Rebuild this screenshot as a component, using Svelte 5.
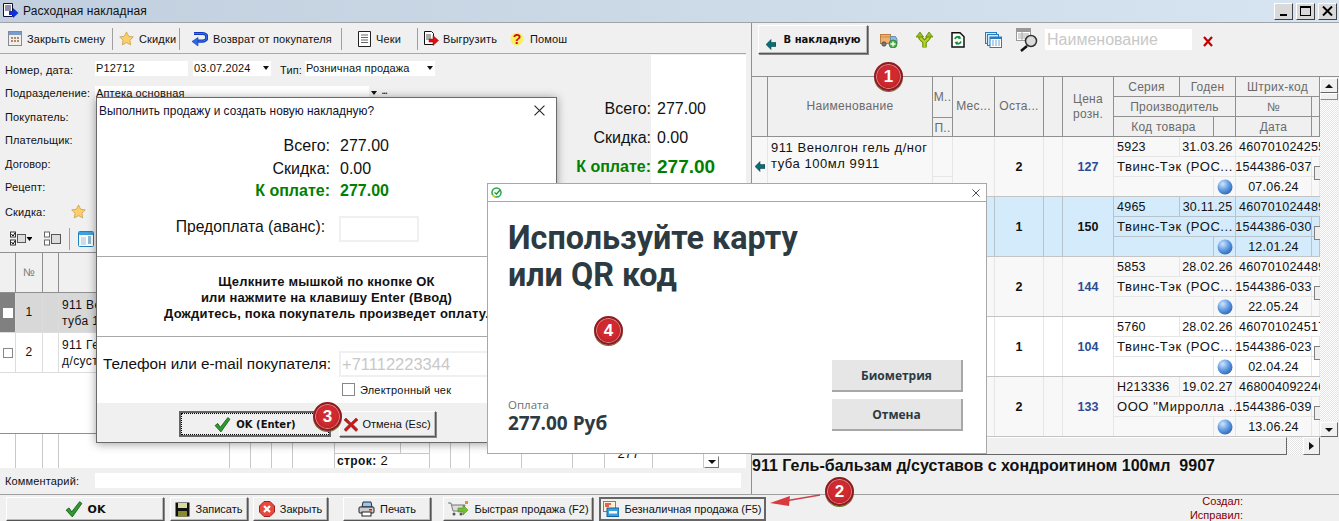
<script>
  // Right grid rows
  const goods = [
    { cls: 'alt', name: '911 Венолгон гель д/ног туба 100мл 9911', cur: true, qty: 2, price: 127, ser: '5923', exp: '31.03.26', code: '4607010242551', mfr: 'Твинс-Тэк (РОС...', num: '1544386-037', date: '07.06.24' },
    { cls: 'sel', name: '911 Гель-бальзам д/суставов с хондроитином', qty: 1, price: 150, ser: '4965', exp: '30.11.25', code: '4607010244890', mfr: 'Твинс-Тэк (РОС...', num: '1544386-030', date: '12.01.24' },
    { cls: 'alt', name: '911 Гель-бальзам', qty: 2, price: 144, ser: '5853', exp: '28.02.26', code: '4607010244890', mfr: 'Твинс-Тэк (РОС...', num: '1544386-033', date: '22.05.24' },
    { cls: '', name: '911 Гель', qty: 1, price: 104, ser: '5760', exp: '28.02.26', code: '4607010245170', mfr: 'Твинс-Тэк (РОС...', num: '1544386-023', date: '02.04.24' },
    { cls: 'alt', name: '911 Крем', qty: 2, price: 133, ser: 'Н213336', exp: '19.02.27', code: '4680040922460', mfr: 'ООО "Мирролла ...', num: '1544386-039', date: '13.06.24' }
  ];

  const lines = [
    { n: 1, a: '911 Венолгон гель д/ног', b: 'туба 100мл 9911', on: true },
    { n: 2, a: '911 Гель-бальзам', b: 'д/суставов с хондроитином', on: false }
  ];
</script>

{#snippet star()}
  <svg width="15" height="15" viewBox="0 0 16 16"><path d="M8 1l2.200 4.600 5 .7-3.600 3.500.9 5L8 12.400l-4.500 2.400.9-5L.8 6.300l5-.7z" fill="#fdcf6a" stroke="#d0a85a"/></svg>
{/snippet}
{#snippet docLines()}
  <svg width="13" height="16" viewBox="0 0 13 16"><path d="M.5.500h12v15H.5z" fill="#fff" stroke="#222"/><path d="M3 4h7M3 6.500h7M3 9h7M3 11.500h7" stroke="#666"/></svg>
{/snippet}
{#snippet docArrow(size)}
  <svg width={size} height={size} viewBox="0 0 16 16"><path d="M1.500.5h7l2 2v11h-9z" fill="#fff" stroke="#111"/><path d="M3 4h5M3 6h5M3 8h5" stroke="#555"/><path d="M6 8h4V4.500l5.500 5-5.500 5V11H6z" fill="#e01010" stroke="#900" stroke-width=".5"/></svg>
{/snippet}
{#snippet check(w)}
  <svg width={w} height={w} viewBox="0 0 16 16"><path d="M1 9l2.500-2 2.500 3.500L13 1.500l2 1.500-8.500 12z" fill="#2f9a2f" stroke="#0c4f0c" stroke-width=".7"/></svg>
{/snippet}
{#snippet sphere()}
  <svg class="sphere" width="16" height="16" viewBox="0 0 16 16"><defs><radialGradient id="ball" cx=".35" cy=".3" r=".8"><stop offset="0" stop-color="#cfe4fb"/><stop offset=".55" stop-color="#5b97e0"/><stop offset="1" stop-color="#2c5fb0"/></radialGradient></defs><circle cx="8" cy="8" r="7.500" fill="url(#ball)"/></svg>
{/snippet}
{#snippet tealArrow()}
  <svg width="10" height="11" viewBox="0 0 10 11"><path d="M0 5.500L5 .5v3h5v4H5v3z" fill="#056e78" stroke="#033" stroke-width=".5"/></svg>
{/snippet}
{#snippet thinX(s)}
  <svg width={s} height={s} viewBox="0 0 10 10"><path d="M.5.500l9 9M9.500.500l-9 9" stroke="#222" stroke-width="1"/></svg>
{/snippet}

<div class="page">
  <header class="titlebar">
    <svg width="16" height="16" viewBox="0 0 16 16"><path d="M.5.500h9v13h-9z" fill="#fff" stroke="#113"/><path d="M2 3h6M2 5h6M2 7h6" stroke="#225"/><path d="M6 8h4V5l5.500 5-5.500 5v-3H6z" fill="#1030e0"/></svg>
    <span class="title">Расходная накладная</span>
    <div class="winbtns">
      <span class="winbtn"><i class="wmin"></i></span>
      <span class="winbtn"><i class="wmax"></i></span>
      <span class="winbtn"><svg width="11" height="10" viewBox="0 0 11 10"><path d="M1 .5l9 9M10 .5l-9 9" stroke="#000" stroke-width="2"/></svg></span>
    </div>
  </header>

  <div class="main">
    <section class="left">
      <div class="toolbar">
        <span class="tool t1">
          <svg width="14" height="15" viewBox="0 0 14 15"><rect x=".5" y=".5" width="13" height="14" fill="#f0eee8" stroke="#889"/><rect x="1" y="1" width="12" height="3" fill="#7a9cc8"/><path d="M3 6h2v2H3zM6 6h2v2H6zM9 6h2v2H9zM3 9h2v2H3zM6 9h2v2H6zM9 9h2v2H9z" fill="#b08a70"/></svg>
          Закрыть смену
        </span>
        <i class="vsep"></i>
        <span class="tool t2">{@render star()} Скидки</span>
        <i class="vsep"></i>
        <span class="tool t3">
          <svg width="17" height="16" viewBox="0 0 17 16"><path d="M3 2.500h9a3.800 3.800 0 010 7.600H6" fill="none" stroke="#1238c0" stroke-width="3.200"/><path d="M3 2.500h9a3.800 3.800 0 010 7.600H6" fill="none" stroke="#3a7ae8" stroke-width="1"/><path d="M7 6.500L1 10.500l6 4.500z" fill="#2a6be0" stroke="#1238c0" stroke-width=".6"/></svg>
          Возврат от покупателя
        </span>
        <i class="vsep"></i>
        <span class="tool t4">{@render docLines()} Чеки</span>
        <i class="vsep"></i>
        <span class="tool t5">{@render docArrow(16)} Выгрузить</span>
        <span class="tool t6">
          <svg width="14" height="16" viewBox="0 0 14 16"><circle cx="7" cy="8" r="6.500" fill="#f8f060"/><text x="7" y="13" text-anchor="middle" font-size="14" font-weight="700" fill="#d01010" font-family="Liberation Sans">?</text></svg>
          Помош
        </span>
      </div>

      <div class="formarea">
        <div class="form">
          <div class="frow">
            <span class="lbl">Номер, дата:</span>
            <span class="field fnum">P12712</span>
            <span class="field fdate">03.07.2024<i class="drop"></i></span>
            <span class="tiplbl">Тип:</span>
            <span class="field ftype">Розничная продажа<i class="drop"></i></span>
          </div>
          <div class="frow">
            <span class="lbl">Подразделение:</span>
            <span class="field fdept">Аптека основная</span>
            <i class="drop solo"></i>
            <span class="dots">•••</span>
          </div>
          <div class="frow"><span class="lbl">Покупатель:</span></div>
          <div class="frow"><span class="lbl">Плательщик:</span></div>
          <div class="frow"><span class="lbl">Договор:</span></div>
          <div class="frow"><span class="lbl">Рецепт:</span></div>
          <div class="frow last"><span class="lbl sk">Скидка:</span>{@render star()}</div>
        </div>
        <div class="totals">
          <div class="tlabels">
            <span>Всего:</span>
            <span>Скидка:</span>
            <span class="pay">К оплате:</span>
          </div>
          <div class="tvalues">
            <span>277.00</span>
            <span>0.00</span>
            <span class="pay big">277.00</span>
          </div>
        </div>
      </div>

      <div class="gridbar">
        <svg width="22" height="16" viewBox="0 0 22 16"><rect x=".5" y="1" width="5" height="5" fill="#fff" stroke="#333"/><rect x=".5" y="9" width="5" height="5" fill="#fff" stroke="#333"/><path d="M1.500 3l1.500 2 2-3M1.500 11l1.500 2 2-3" stroke="#000" fill="none"/><rect x="7.500" y="3.500" width="8" height="8" fill="#ddd" stroke="#555"/><path d="M16.500 6h6l-3 4z" fill="#000"/></svg>
        <svg class="g2" width="19" height="16" viewBox="0 0 19 16"><rect x=".5" y="1" width="5" height="5" fill="#fff" stroke="#666"/><rect x=".5" y="9" width="5" height="5" fill="#fff" stroke="#666"/><rect x="7.500" y="3.500" width="9" height="9" fill="#ddd" stroke="#555"/></svg>
        <i class="vsep g3"></i>
        <svg width="16" height="16" viewBox="0 0 16 16"><rect x=".5" y=".5" width="15" height="15" rx="1" fill="#fff" stroke="#2080c0"/><rect x="1" y="1" width="14" height="3" fill="#40a0e0"/><path d="M3 6h5v8H3z" fill="#cde"/><path d="M10 6h3M10 8h3M10 10h3M10 12h3" stroke="#27a"/></svg>
      </div>

      <div class="lgrid">
        <div class="lhead">
          <i></i><b>№</b><i></i><i class="rest"></i>
        </div>
        {#each lines as l}
          <div class="lrow" class:on={l.on}>
            <span class="lchk"><i></i></span>
            <span class="lnum">{l.n}</span>
            <span class="lgap"></span>
            <span class="ltext">{l.a}<br />{l.b}</span>
          </div>
        {/each}
        <div class="lempty"></div>
        <div class="lfoot">
          <i></i><i></i><i></i><i></i><i></i><i></i><i></i><i></i>
          <div class="fcount"><div class="ftop"><i></i></div><b>строк:</b> 2</div>
          <i></i><i></i><i></i><i></i><i></i>
          <div class="fsum">277</div>
          <i></i>
          <span class="fscroll"></span>
        </div>
      </div>

      <div class="comment">
        <span class="lbl">Комментарий:</span>
        <span class="field fcomment"></span>
      </div>
    </section>

    <section class="right">
      <div class="rtools">
        <button class="raised back">{@render tealArrow()} В накладную</button>
        <svg class="ri1" width="18" height="16" viewBox="0 0 18 16"><rect x=".5" y="2.500" width="10" height="9" fill="#f2b070" stroke="#b88040"/><path d="M1 5h9" stroke="#d08840"/><path d="M10.500 4.500h5l1.500 3v4h-6.500z" fill="#8ab8e8" stroke="#6a8ab0"/><circle cx="4" cy="12" r="2.200" fill="#777" stroke="#444" stroke-width=".7"/><circle cx="13" cy="12" r="4" fill="#48b048" stroke="#2a7a2a" stroke-width=".7"/><path d="M10.500 12h5M13 9.500v5" stroke="#fff" stroke-width="1.300"/></svg>
        <svg class="ri2" width="17" height="16" viewBox="0 0 17 16"><path d="M8.500 15.500V11C8.500 8 4 8 4 4M8.500 11C8.500 8 13 8 13 4" fill="none" stroke="#6a8a10" stroke-width="4.500"/><path d="M8.500 15V11C8.500 8 4 8 4 4M8.500 11C8.500 8 13 8 13 4" fill="none" stroke="#b4d820" stroke-width="2.200"/><path d="M0 5L4 0l3.500 5zM9.500 5L13 0l4 5z" fill="#9cc018" stroke="#5a7a08" stroke-width=".7"/></svg>
        <svg class="ri3" width="14" height="16" viewBox="0 0 14 16"><path d="M1 .8h8l4 4V15H1z" fill="#fff" stroke="#111" stroke-width="1.500"/><path d="M4 7a3.200 3.200 0 015-1.500M10 9.500a3.200 3.200 0 01-5 1.500" fill="none" stroke="#109030" stroke-width="1.800"/><path d="M8 3.500l2.500 3-3.500.5zM6 13l-2.500-3 3.500-.5z" fill="#109030"/></svg>
        <svg class="ri4" width="17" height="16" viewBox="0 0 17 16"><rect x=".5" y=".5" width="11" height="11" fill="#d4e8f8" stroke="#2a7cc0"/><rect x="2.500" y="2.500" width="11" height="11" fill="#d4e8f8" stroke="#2a7cc0"/><rect x="5" y="5" width="11.500" height="10.500" fill="#fff" stroke="#2a7cc0"/><rect x="5" y="5" width="11.500" height="2" fill="#2a7cc0"/><path d="M7 9h8M7 11h8M7 13h8" stroke="#6aa0d0" stroke-dasharray="2 1"/></svg>
        <svg class="ri5" width="23" height="24" viewBox="0 0 23 24"><rect x=".5" y=".5" width="14" height="12" fill="#fff" stroke="#999"/><rect x="1" y="1" width="13" height="3" fill="#999"/><path d="M2 6h11M2 8h11M2 10h11" stroke="#aaa"/><path d="M6 4v8" stroke="#aaa"/><circle cx="15" cy="13" r="5.500" fill="#dcdcdc" stroke="#333" stroke-width="1.500"/><path d="M11 18l-6 5" stroke="#111" stroke-width="2.500"/></svg>
        <span class="search">Наименование</span>
        <svg class="ri6" width="10" height="11" viewBox="0 0 10 11"><path d="M1 1l8 9M9 1l-8 9" stroke="#c00000" stroke-width="2.200"/></svg>
      </div>

      <div class="rgridwrap">
        <div class="rgrid">
          <div class="rhead">
            <span class="c0 hc"></span>
            <span class="c1 hc">Наименование</span>
            <span class="c2 hc split"><em>М..</em><em>П..</em></span>
            <span class="c3 hc">Мес...</span>
            <span class="c4 hc">Оста...</span>
            <span class="c5 hc"></span>
            <span class="c6 hc">Цена<br />розн.</span>
            <div class="sub subhead">
              <div class="s1"><span>Серия</span><span>Годен</span><span>Штрих-код</span></div>
              <div class="s2"><span>Производитель</span><span>№</span><span></span></div>
              <div class="s3"><span>Код товара</span><span></span><span>Дата</span><span></span></div>
            </div>
          </div>
          {#each goods as g}
            <div class="rrow {g.cls}">
              <span class="c0 dc">{#if g.cur}{@render tealArrow()}{/if}</span>
              <span class="c1 dc name">{g.name}</span>
              <span class="c2 dc split"><em></em><em></em></span>
              <span class="c3 dc"></span>
              <span class="c4 dc qty">{g.qty}</span>
              <span class="c5 dc"></span>
              <span class="c6 dc price">{g.price}</span>
              <div class="sub">
                <div class="s1"><span class="tl">{g.ser}</span><span>{g.exp}</span><span class="clip">{g.code}</span></div>
                <div class="s2"><span class="tl mf">{g.mfr}</span><span>{g.num}</span><span></span></div>
                <div class="s3"><span></span><span>{@render sphere()}</span><span>{g.date}</span><span></span></div>
                <i class="stub"></i>
              </div>
            </div>
          {/each}
        </div>
        <div class="vscroll">
          <span class="sbtn"><i class="up"></i></span>
          <span class="thumb"></span>
          <span class="strack"></span>
          <span class="sbtn"><i class="down"></i></span>
        </div>
        <div class="hscroll">
          <span class="hthumb"></span>
          <span class="hbtn"><i class="rightarrow"></i></span>
        </div>
      </div>

      <div class="goodname">911 Гель-бальзам д/суставов с хондроитином 100мл&nbsp;&nbsp;9907</div>
    </section>
  </div>

  <footer class="bottom">
    <button class="raised b-ok">{@render check(18)} <b>OK</b></button>
    <button class="raised b-save">
      <svg width="15" height="15" viewBox="0 0 15 15"><path d="M.5.500h14v14H.500z" fill="#111"/><rect x="3" y="1" width="9" height="5" fill="#d8d8a0"/><rect x="3" y="9" width="9" height="5.500" fill="#8a8a30"/></svg>
      Записать
    </button>
    <button class="raised b-close">
      <svg width="16" height="16" viewBox="0 0 16 16"><path d="M5 .5h6L15.500 5v6L11 15.500H5L.5 11V5z" fill="#e84a3c" stroke="#a02020"/><path d="M5 5l6 6M11 5l-6 6" stroke="#fff" stroke-width="2.200"/></svg>
      Закрыть
    </button>
    <button class="raised b-print">
      <svg width="17" height="16" viewBox="0 0 17 16"><path d="M5 1h8l1 5H4z" fill="#9ec4ec" stroke="#234"/><rect x="1" y="6" width="15" height="6" rx="1" fill="#ccc" stroke="#222"/><rect x="4" y="11" width="9" height="4" fill="#fff" stroke="#222"/><rect x="11" y="8" width="3" height="1.500" fill="#d02020"/></svg>
      Печать
    </button>
    <button class="raised b-fast">
      <svg width="22" height="16" viewBox="0 0 22 16"><path d="M1 2h3l2 8h10l2-6H5" fill="#ddd" stroke="#777"/><circle cx="7" cy="13" r="1.500" fill="#555"/><circle cx="14" cy="13" r="1.500" fill="#555"/><path d="M11 7h5V4l5 5-5 5v-3h-5z" fill="#70c030" stroke="#487818" stroke-width=".5"/><rect x="18" y="0" width="3" height="3" fill="#e09030"/></svg>
      Быстрая продажа (F2)
    </button>
    <button class="raised b-card">
      <svg width="16" height="16" viewBox="0 0 16 16"><rect x=".5" y=".5" width="12" height="10" fill="#fff0d8" stroke="#c07020"/><path d="M2 3h6M2 5h4" stroke="#e03020" stroke-width="1.500"/><rect x="4" y="7" width="12" height="8.500" fill="#38a0e0" stroke="#15609a"/><rect x="6" y="10" width="8" height="2.500" fill="#fff"/></svg>
      Безналичная продажа (F5)
    </button>
    <div class="stamp"><span>Создал:</span><span>Исправил:</span></div>
  </footer>

  <!-- Payment confirm dialog -->
  <div class="dlg dlg-pay">
    <div class="dtitle"><span>Выполнить продажу и создать новую накладную?</span>{@render thinX(11)}</div>
    <div class="dsum">
      <div class="dline"><span>Всего:</span><span>277.00</span></div>
      <div class="dline"><span>Скидка:</span><span>0.00</span></div>
      <div class="dline pay"><span>К оплате:</span><span>277.00</span></div>
      <div class="dline adv"><span>Предоплата (аванс):</span><i class="dinput short"></i></div>
    </div>
    <div class="dhint">
      Щелкните мышкой по кнопке ОК<br />
      или нажмите на клавишу Enter (Ввод)<br />
      Дождитесь, пока покупатель произведет оплату.
    </div>
    <div class="dphone">
      <div class="phoneline"><span class="plabel">Телефон или e-mail покупателя:</span><span class="dinput long">+71112223344</span></div>
      <label class="ecb"><i></i>Электронный чек</label>
    </div>
    <div class="dbtns">
      <button class="raised focus"><span class="dotted">{@render check(17)} <b>OK (Enter)</b></span></button>
      <button class="raised dcancel">
        <svg width="14" height="15" viewBox="0 0 14 15"><path d="M2 1l5 5 5-5 2 2-5 4.500 5 5-2 2-5-5-5 5-2-2 5-5L0 3z" fill="#c81818" stroke="#701010" stroke-width=".5"/></svg>
        Отмена (Esc)
      </button>
    </div>
  </div>

  <!-- Terminal dialog -->
  <div class="dlg dlg-card">
    <div class="ctitle">
      <svg width="11" height="11" viewBox="0 0 11 11"><circle cx="5.500" cy="5.500" r="4.500" fill="none" stroke="#2aa84a" stroke-width="1.500"/><path d="M1.500 8a4.500 4.500 0 003 2" fill="none" stroke="#e8d020" stroke-width="1.500"/><path d="M3.500 5.500l2 1.500 3.500-4" fill="none" stroke="#1c9040" stroke-width="1.300"/></svg>
      {@render thinX(8)}
    </div>
    <div class="cbody">
      <div class="cleft">
        <h1>Используйте карту<br />или QR код</h1>
        <div class="csum"><small>Оплата</small><strong>277.00 Руб</strong></div>
      </div>
      <div class="cbtns">
        <button class="flat">Биометрия</button>
        <button class="flat">Отмена</button>
      </div>
    </div>
  </div>

  <!-- Annotations -->
  <svg class="arrow" width="60" height="16" viewBox="0 0 60 16"><path d="M12 9.500L50 3" stroke="#c8444a" stroke-width="1.500"/><path d="M0 11l20-7-1 10z" fill="#d93a40"/></svg>
  <span class="badge bd1">1</span>
  <span class="badge bd2">2</span>
  <span class="badge bd3">3</span>
  <span class="badge bd4">4</span>
</div>

<style>
  :global(body) {
    margin: 0;
  }

  .page {
    position: relative;
    width: 1339px;
    height: 521px;
    overflow: hidden;
    display: flex;
    flex-direction: column;
    background: #f0f0f0;
    color: #111;
    font-family: "Liberation Sans", Arial, sans-serif;
    font-size: 12px;
  }

  button {
    font: inherit;
    color: inherit;
  }

  i {
    display: block;
  }

  /* Title bar */
  .titlebar {
    flex: none;
    height: 23px;
    box-sizing: border-box;
    border-bottom: 1px solid #a0a4a8;
    display: flex;
    align-items: center;
    padding-left: 3px;
    background: linear-gradient(90deg, #c1cfde, #d7e5f2);
  }

  .title {
    margin-left: 4px;
    font-size: 12px;
    letter-spacing: 0.1px;
  }

  .winbtns {
    margin-left: auto;
    margin-right: 2px;
    display: flex;
    gap: 3px;
  }

  .winbtn {
    width: 19px;
    height: 17px;
    box-sizing: border-box;
    background: #d9d9d9;
    border: 1px solid;
    border-color: #fff #404040 #404040 #fff;
    display: flex;
    align-items: center;
    justify-content: center;
  }

  .wmin {
    width: 7px;
    height: 2px;
    background: #000;
    margin-top: 8px;
  }

  .wmax {
    width: 11px;
    height: 10px;
    box-sizing: border-box;
    border: 1px solid #000;
    border-top-width: 2px;
  }

  .main {
    flex: none;
    height: 471px;
    display: flex;
    border-bottom: 1px solid #a0a0a0;
  }

  /* Left pane */
  .left {
    width: 746px;
    flex: none;
    display: flex;
    flex-direction: column;
    font-size: 11px;
    letter-spacing: 0.15px;
  }

  .toolbar {
    height: 31px;
    flex: none;
    box-sizing: border-box;
    border-bottom: 1px solid #a8a8a8;
    display: flex;
    align-items: center;
    padding: 1px 0 0 8px;
  }

  .tool {
    display: flex;
    align-items: center;
    gap: 5px;
    white-space: nowrap;
  }

  .vsep {
    width: 1px;
    height: 22px;
    background: #a0a0a0;
    flex: none;
  }

  .t1 { width: 104px; }
  .t2 { width: 60px; margin-left: 6px; }
  .t3 { width: 150px; margin-left: 11px; }
  .t4 { width: 59px; margin-left: 16px; }
  .t5 { margin-left: 5px; width: 87px; gap: 4px; }
  .t6 { gap: 6px; }

  .formarea {
    flex: none;
    height: 171px;
    display: flex;
  }

  .form {
    width: 541px;
    flex: none;
    padding: 4px 0 0 5px;
    box-sizing: border-box;
  }

  .frow {
    height: 23.5px;
    display: flex;
    align-items: center;
  }

  .frow.last {
    margin-top: 1px;
  }

  .lbl {
    width: 90px;
    flex: none;
    white-space: nowrap;
  }

  .lbl.sk {
    width: 66px;
  }

  .field {
    height: 15px;
    line-height: 15px;
    background: #fff;
    display: flex;
    align-items: center;
    padding-left: 1px;
    box-sizing: border-box;
    white-space: nowrap;
    justify-content: space-between;
    margin-bottom: 3px;
  }

  .fnum { width: 93px; }
  .fdate { width: 78px; margin-left: 5px; padding-right: 2px; }
  .tiplbl { margin: 0 3px 0 9px; }
  .ftype { width: 130px; padding-right: 2px; }
  .fdept { width: 274px; margin-bottom: 0; }

  .drop {
    width: 0;
    height: 0;
    border: 3px solid transparent;
    border-top: 4px solid #111;
    border-bottom: 0;
    margin-left: 3px;
  }

  .drop.solo {
    margin-left: 2px;
  }

  .dots {
    margin-left: 5px;
    font-size: 5px;
    letter-spacing: 0;
    font-weight: 700;
  }

  .totals {
    flex: 1;
    display: flex;
    align-items: flex-start;
    margin-top: 1px;
  }

  .tlabels,
  .tvalues {
    height: 128px;
    box-sizing: border-box;
    padding-top: 39px;
    display: flex;
    flex-direction: column;
    font-size: 16px;
    letter-spacing: 0;
  }

  .tlabels span,
  .tvalues span {
    height: 29px;
    line-height: 29px;
  }

  .tlabels {
    width: 110px;
    text-align: right;
  }

  .tvalues {
    width: 95px;
    background: #fff;
    padding-left: 6px;
  }

  .pay {
    color: #008000;
    font-weight: 700;
  }

  .big {
    font-size: 19px;
  }

  .gridbar {
    flex: none;
    height: 28px;
    box-sizing: border-box;
    border-bottom: 1px solid #909090;
    display: flex;
    align-items: center;
    padding-left: 10px;
  }

  .g2 { margin-left: 12px; }
  .g3 { margin: 0 8px 0 6px; }

  /* Left grid */
  .lgrid {
    flex: none;
    height: 215px;
    background: #fff;
    display: flex;
    flex-direction: column;
  }

  .lhead {
    height: 40px;
    flex: none;
    background: #f0f0f0;
    box-sizing: border-box;
    border-bottom: 1px solid #909090;
    display: grid;
    grid-template-columns: 16px 27px 16px 1fr;
  }

  .lhead i,
  .lhead b {
    border-right: 1px solid #909090;
  }

  .lhead b {
    font-weight: 400;
    color: #777;
    text-align: center;
    line-height: 39px;
  }

  .lhead .rest {
    border-right: 0;
  }

  .lrow {
    height: 40px;
    flex: none;
    box-sizing: border-box;
    border-bottom: 1px solid #dcdcdc;
    display: grid;
    grid-template-columns: 16px 27px 16px 1fr;
    align-items: center;
    font-size: 12px;
  }

  .lrow.on {
    background: #d8d8d8;
  }

  .lchk {
    height: 100%;
    display: flex;
    align-items: center;
    justify-content: center;
    border-right: 1px solid #dcdcdc;
  }

  .lchk i {
    width: 10px;
    height: 10px;
    box-sizing: border-box;
    border: 1px solid #888;
    background: #fff;
  }

  .on .lchk {
    background: #808080;
  }

  .on .lchk i {
    border-color: #fff;
  }

  .lnum {
    text-align: center;
    height: 100%;
    line-height: 39px;
    border-right: 1px solid #dcdcdc;
  }

  .lgap {
    height: 100%;
    border-right: 1px solid #dcdcdc;
  }

  .ltext {
    padding-left: 3px;
    line-height: 16px;
    white-space: nowrap;
    letter-spacing: 0.4px;
  }

  .lempty {
    flex: none;
    height: 61px;
    border-bottom: 1px solid #909090;
    box-sizing: border-box;
  }

  .lfoot {
    flex: 1;
    min-height: 0;
    display: grid;
    grid-template-columns: 16px 27px 16px 171px 21px 21px 21px 42px 95px 21px 19px 52px 51px 32px 48px 51px 20px 21px;
    align-items: stretch;
  }

  .lfoot > i {
    border-right: 1px solid #c8c8c8;
  }

  .fcount {
    border-right: 1px solid #c8c8c8;
    font-size: 13px;
    line-height: 14px;
    white-space: nowrap;
    overflow: hidden;
  }

  .fcount b {
    padding-left: 2px;
    font-size: 12px;
    letter-spacing: 0.4px;
  }

  .ftop {
    height: 19px;
    border-bottom: 1px solid #c8c8c8;
  }

  .ftop i {
    width: 65px;
    height: 100%;
    border-right: 1px solid #c8c8c8;
  }

  .fsum {
    border-right: 1px solid #c8c8c8;
    font-size: 13px;
    text-align: center;
    padding-top: 14px;
    line-height: 12px;
  }

  .fscroll {
    position: relative;
    margin: 22px 1px 0 0;
    height: 12px;
    border: 1px solid;
    border-color: #fff #777 #777 #fff;
    width: 15px;
    box-sizing: border-box;
  }

  .fscroll::after {
    content: "";
    position: absolute;
    left: 3px;
    top: 3px;
    border: 4px solid transparent;
    border-top: 4px solid #111;
    border-bottom: 0;
  }

  .comment {
    flex: 1;
    display: flex;
    align-items: center;
    padding-left: 5px;
  }

  .fcomment {
    width: 646px;
    margin-bottom: 2px;
  }

  /* Right pane */
  .right {
    flex: 1;
    min-width: 0;
    margin-left: 5px;
    border-left: 1px solid #909090;
    display: flex;
    flex-direction: column;
  }

  .rtools {
    height: 53px;
    flex: none;
    border-bottom: 1px solid #909090;
    display: flex;
    align-items: flex-start;
    padding-left: 6px;
  }

  .rtools svg {
    margin-top: 9px;
  }

  .raised {
    background: #f0f0f0;
    border: 1px solid;
    border-color: #fff #555 #555 #fff;
    box-shadow: 1px 1px 0 #888, inset -1px -1px 0 #bbb;
    padding: 0;
    display: flex;
    align-items: center;
    justify-content: center;
    gap: 5px;
    box-sizing: border-box;
    white-space: nowrap;
    font-size: 11px;
  }

  .back {
    width: 110px;
    height: 29px;
    margin-top: 2px;
    gap: 8px;
    font-family: "DejaVu Sans", sans-serif;
    font-weight: 700;
    font-size: 10px;
  }

  .rtools .ri1 { margin-left: 12px; }
  .rtools .ri2 { margin-left: 18px; }
  .rtools .ri3 { margin-left: 18px; }
  .rtools .ri4 { margin-left: 20px; }
  .rtools .ri5 { margin: 5px 0 0 14px; }

  .search {
    width: 147px;
    height: 21px;
    line-height: 22px;
    margin: 6px 0 0 6px;
    background: #fff;
    color: #c8c8c8;
    font-size: 16px;
    padding-left: 2px;
    box-sizing: border-box;
  }

  .rtools .ri6 {
    margin: 13px 0 0 11px;
  }

  .rgridwrap {
    flex: none;
    height: 378px;
    display: grid;
    grid-template-columns: 568px 18px;
    grid-template-rows: 360px 18px;
  }

  .rgrid {
    overflow: hidden;
    background: #fff;
  }

  .rhead,
  .rrow {
    height: 60px;
    box-sizing: border-box;
    display: grid;
    grid-template-columns: 16px 165px 20px 42px 49px 19px 51px 206px;
    font-size: 12px;
  }

  .rhead {
    background: #f0f0f0;
    border-bottom: 1px solid #909090;
    color: #6a6a6a;
    letter-spacing: 0.3px;
  }

  .rrow {
    border-bottom: 1px solid #c4c4c4;
    background: #fff;
  }

  .rrow.alt {
    background: #f8f8f8;
  }

  .rrow.sel {
    background: #d3ebfb;
  }

  .hc,
  .dc {
    box-sizing: border-box;
    display: flex;
    align-items: center;
    justify-content: center;
    text-align: center;
    border-right: 1px solid #e6e6e6;
    overflow: hidden;
    white-space: nowrap;
  }

  .hc {
    border-right-color: #909090;
    line-height: 15px;
    white-space: normal;
  }

  .sel .dc {
    border-right-color: #b8c4cc;
  }

  .split {
    flex-direction: column;
    align-items: stretch;
  }

  .split em {
    font-style: normal;
    height: 40px;
    line-height: 40px;
    box-sizing: border-box;
  }

  .split em + em {
    height: 20px;
    line-height: 20px;
    border-top: 1px solid #909090;
  }

  .rrow .split em + em {
    border-top-color: #e6e6e6;
  }

  .name {
    text-align: left;
    justify-content: flex-start;
    align-items: flex-start;
    white-space: normal;
    padding: 3px 3px 0 3px;
    letter-spacing: 0.55px;
    line-height: 16px;
    font-size: 13px;
  }

  .qty,
  .price {
    font-weight: 700;
    font-size: 12.5px;
  }

  .price {
    color: #2c4c92;
  }

  .sel .price {
    color: #111;
  }

  .sub {
    position: relative;
    display: flex;
    flex-direction: column;
    min-width: 0;
    overflow: hidden;
  }

  .s1,
  .s2,
  .s3 {
    height: 20px;
    display: grid;
    flex: none;
  }

  .s1 { grid-template-columns: 66px 56px 84px; }
  .s2 { grid-template-columns: 122px 76px 8px; }
  .s3 { grid-template-columns: 100px 22px 76px 8px; }

  .sub span {
    box-sizing: border-box;
    border-right: 1px solid #e6e6e6;
    border-bottom: 1px solid #e6e6e6;
    display: flex;
    align-items: center;
    justify-content: center;
    white-space: nowrap;
    overflow: hidden;
    font-size: 12.5px;
    letter-spacing: 0.25px;
  }

  .sub .tl {
    justify-content: flex-start;
    padding-left: 3px;
  }

  .sub .mf {
    font-size: 13px;
    letter-spacing: 0.55px;
  }

  .sub .clip {
    justify-content: flex-start;
    padding-left: 3px;
    border-right: 0;
  }

  .rrow .s3 span {
    border-bottom: 0;
  }

  .sel .sub span {
    border-color: #b8c4cc;
  }

  .subhead span {
    border-color: #909090;
    font-size: 12px;
  }

  .subhead .s3 span {
    border-bottom: 0;
  }

  .stub {
    position: absolute;
    right: -2px;
    top: 29px;
    width: 6px;
    height: 12px;
    border: 1px solid #808080;
    background: #eee;
  }

  .sphere {
    display: block;
  }

  .vscroll {
    display: flex;
    flex-direction: column;
    background: #f3f3f3;
  }

  .sbtn {
    height: 15px;
    flex: none;
    box-sizing: border-box;
    margin-top: 1px;
    background: #f0f0f0;
    border: 1px solid;
    border-color: #fff #666 #666 #fff;
    display: flex;
    align-items: center;
    justify-content: center;
  }

  .thumb {
    height: 7px;
    flex: none;
    background: #f0f0f0;
    border: 1px solid;
    border-color: #fff #888 #888 #fff;
    box-sizing: border-box;
  }

  .strack {
    flex: 1;
    background: repeating-conic-gradient(#e4e4e4 0 25%, #fff 0 50%) 0 0 / 2px 2px;
  }

  .up,
  .down {
    width: 0;
    height: 0;
    border: 4px solid transparent;
  }

  .up {
    border-bottom: 4px solid #111;
    border-top: 0;
  }

  .down {
    border-top: 4px solid #111;
    border-bottom: 0;
  }

  .hscroll {
    display: flex;
    justify-content: space-between;
    background: repeating-conic-gradient(#e4e4e4 0 25%, #fff 0 50%) 0 0 / 2px 2px;
  }

  .hthumb {
    width: 535px;
    background: #f0f0f0;
    border-bottom: 1px solid #666;
    border-right: 1px solid #666;
    border-top: 1px solid #fff;
    box-sizing: border-box;
  }

  .hbtn {
    width: 17px;
    background: #f0f0f0;
    border: 1px solid;
    border-color: #fff #666 #666 #fff;
    box-sizing: border-box;
    display: flex;
    align-items: center;
    justify-content: center;
  }

  .rightarrow {
    width: 0;
    height: 0;
    border: 4px solid transparent;
    border-left: 5px solid #111;
    border-right: 0;
  }

  .goodname {
    flex: 1;
    padding: 1px 0 0 0;
    font-size: 16px;
    font-weight: 700;
    white-space: nowrap;
    line-height: 20px;
  }

  /* Bottom bar */
  .bottom {
    flex: none;
    height: 27px;
    display: flex;
    align-items: flex-start;
    padding: 2px 0 0 6px;
    box-sizing: border-box;
    position: relative;
  }

  .bottom .raised {
    height: 24px;
  }

  .b-ok { width: 158px; gap: 5px; font-family: "DejaVu Sans", sans-serif; font-size: 11px; }
  .b-save { width: 78px; margin-left: 6px; }
  .b-close { width: 75px; margin-left: 5px; }
  .b-print { width: 88px; margin-left: 15px; }
  .b-fast { width: 150px; margin-left: 12px; }
  .b-card {
    width: 167px;
    margin-left: 6px;
    border: 2px solid #666;
    box-shadow: none;
  }

  .stamp {
    position: absolute;
    left: 1100px;
    top: -1px;
    width: 143px;
    display: flex;
    flex-direction: column;
    align-items: flex-end;
    color: #800000;
    font-size: 11px;
    line-height: 14px;
  }

  /* Dialogs */
  .dlg {
    position: absolute;
    box-sizing: border-box;
    display: flex;
    flex-direction: column;
    background: #fff;
  }

  .dlg-pay {
    left: 96px;
    top: 97px;
    width: 461px;
    height: 346px;
    border: 1px solid #6a6a6a;
    box-shadow: 0 1px 9px rgba(0, 0, 0, 0.38);
    font-size: 16px;
  }

  .dtitle {
    height: 25px;
    flex: none;
    display: flex;
    justify-content: space-between;
    align-items: center;
    padding: 0 11px 0 2px;
    font-size: 11.9px;
    color: #101030;
  }

  .dsum {
    height: 134px;
    flex: none;
    box-sizing: border-box;
    padding-top: 12px;
    border-bottom: 1px solid #a8a8a8;
  }

  .dline {
    display: grid;
    grid-template-columns: 233px 1fr;
    column-gap: 10px;
    height: 22.5px;
    line-height: 22px;
  }

  .dline span:first-child {
    text-align: right;
  }

  .adv {
    margin-top: 13px;
    grid-template-columns: 228px 1fr;
    column-gap: 14px;
    font-size: 15.7px;
  }

  .dinput {
    display: block;
    box-sizing: border-box;
    border: 2px solid #f0f0f0;
    background: #fff;
  }

  .short {
    width: 80px;
    height: 26px;
  }

  .dhint {
    height: 80px;
    flex: none;
    box-sizing: border-box;
    padding-top: 17px;
    border-bottom: 1px solid #a8a8a8;
    text-align: center;
    font-size: 13px;
    font-weight: 700;
    line-height: 16px;
    letter-spacing: 0.2px;
    white-space: nowrap;
  }

  .dphone {
    flex: 1;
    padding: 14px 0 0 6px;
  }

  .phoneline {
    display: flex;
    align-items: center;
    white-space: nowrap;
  }

  .plabel {
    width: 236px;
    flex: none;
    font-size: 15.3px;
  }

  .long {
    flex: 1;
    height: 26px;
    line-height: 23px;
    color: #c8c8c8;
    font-size: 16.5px;
    padding-left: 1px;
  }

  .ecb {
    display: flex;
    align-items: center;
    gap: 5px;
    margin: 6px 0 0 239px;
    font-size: 11px;
    letter-spacing: 0.2px;
  }

  .ecb i {
    width: 11px;
    height: 11px;
    border: 1px solid #888;
  }

  .dbtns {
    height: 39px;
    flex: none;
    background: #f0f0f0;
    display: flex;
    align-items: flex-start;
    padding: 8px 0 0 82px;
    box-sizing: border-box;
    gap: 8px;
  }

  .dbtns .raised {
    height: 26px;
  }

  .focus {
    width: 152px;
    border: 2px solid #666;
    box-shadow: none;
  }

  .dotted {
    width: 100%;
    height: 100%;
    box-sizing: border-box;
    border: 1px dotted #000;
    display: flex;
    align-items: center;
    justify-content: center;
    gap: 5px;
    font-family: "DejaVu Sans", sans-serif;
    font-size: 10px;
  }

  .dcancel {
    width: 97px;
    gap: 4px;
  }

  .dlg-card {
    left: 487px;
    top: 183px;
    width: 500px;
    height: 271px;
    border: 1px solid #a8a8a8;
    font-family: "Open Sans", sans-serif;
    color: #2c3a42;
  }

  .ctitle {
    height: 17px;
    flex: none;
    border-bottom: 1px solid #a8a8a8;
    display: flex;
    justify-content: space-between;
    align-items: center;
    padding: 0 6px 0 3px;
  }

  .cbody {
    flex: 1;
    display: flex;
    justify-content: space-between;
    padding: 0 23px 0 20px;
  }

  .cleft {
    display: flex;
    flex-direction: column;
    justify-content: space-between;
    padding: 18px 0 19px;
  }

  h1 {
    margin: 0;
    font-family: Roboto, sans-serif;
    font-size: 32.3px;
    line-height: 37px;
    font-weight: 700;
  }

  .csum small {
    display: block;
    font-size: 11.5px;
    color: #707070;
    line-height: 15px;
  }

  .csum strong {
    display: block;
    font-size: 19px;
    line-height: 22px;
  }

  .cbtns {
    display: flex;
    flex-direction: column;
    justify-content: flex-end;
    gap: 7px;
    padding-bottom: 22px;
  }

  .flat {
    width: 131px;
    height: 32px;
    background: #e6e6e6;
    border: 0;
    border-right: 2px solid #a8a8a8;
    border-bottom: 2px solid #a8a8a8;
    font-family: "Open Sans", sans-serif;
    font-weight: 700;
    font-size: 12px;
    color: #2c3a42;
  }

  /* Annotations over everything */
  .badge {
    position: absolute;
    width: 29px;
    height: 29px;
    box-sizing: border-box;
    border-radius: 50%;
    display: flex;
    align-items: center;
    justify-content: center;
    background: radial-gradient(circle at 50% 45%, #d02a30 0 45%, #a5151c 100%);
    border: 2px solid #8c1c20;
    box-shadow: inset 0 0 0 1px #dc8a8a, 0 1px 0 #687a30;
    color: #fff;
    font-size: 17px;
    font-weight: 700;
  }

  .bd1 { left: 874px; top: 62px; }
  .bd2 { left: 825px; top: 477px; }
  .bd3 { left: 313px; top: 402px; }
  .bd4 { left: 594px; top: 316px; }

  .arrow {
    position: absolute;
    left: 770px;
    top: 492px;
  }
</style>
